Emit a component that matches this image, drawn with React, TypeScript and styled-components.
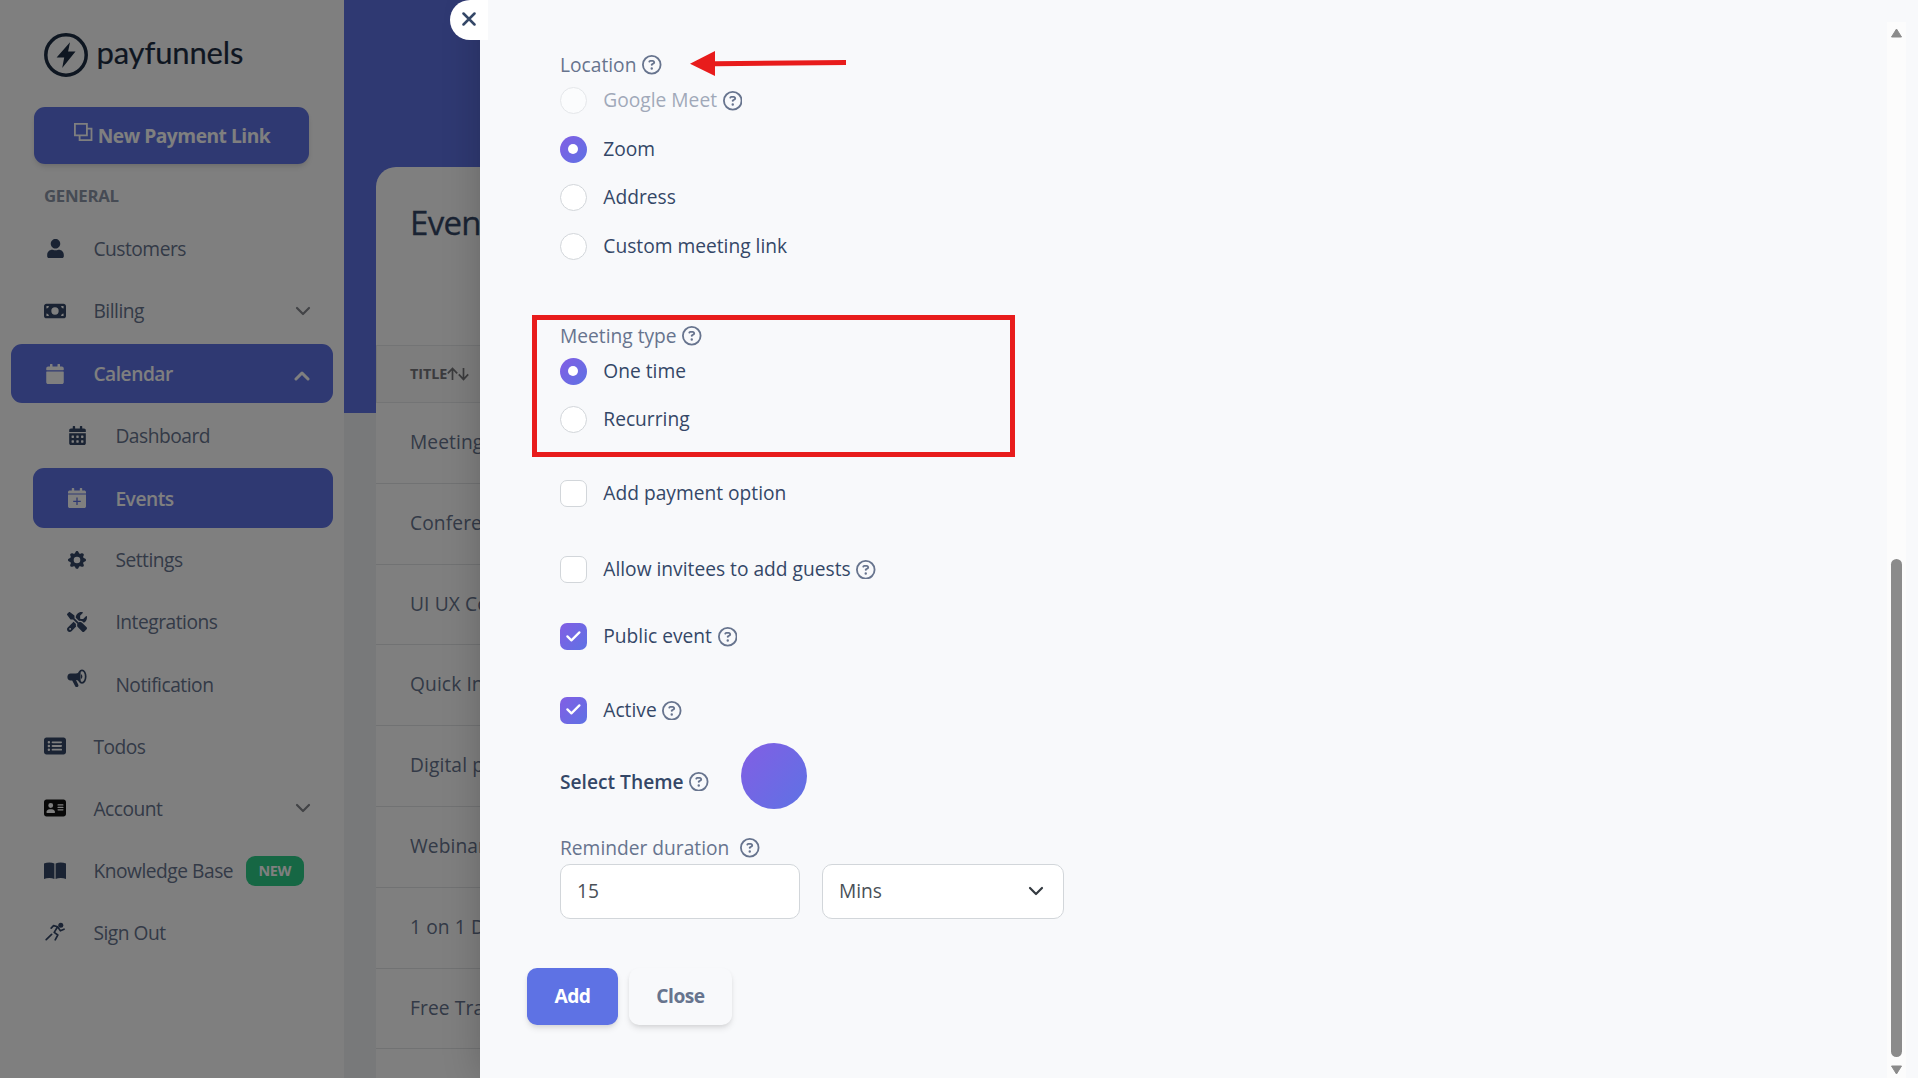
import React from 'react';
import styled, { createGlobalStyle, css } from 'styled-components';
import {
  FaAddressCard,
  FaMoneyBill,
  FaRectangleList,
  FaRegCircleQuestion,
  FaScrewdriverWrench,
} from 'react-icons/fa6';
import { FaCalendar, FaCalendarAlt, FaUser } from 'react-icons/fa';
import { BsGearFill } from 'react-icons/bs';

const colors = {
  primary: '#5e72e4',
  dark: '#344767',
  text: '#67748e',
  surface: '#f8f9fb',
  border: '#d2d6da',
  danger: '#e81c1c',
  gradient: 'linear-gradient(310deg, #5e72e4 0%, #825ee4 100%)',
};

/* ---------- icons ---------- */

const LogoMark = () => (
  <svg width="44" height="44" viewBox="0 0 44 44">
    <circle cx="22" cy="22" r="20.2" fill="none" stroke="#1c2d42" strokeWidth="3.5" />
    <path d="M26 9.2 12.6 24.4h7.6L18.2 35 31.5 18.4h-7.4z" fill="#1c2d42" />
  </svg>
);

const LinkCopy = () => (
  <svg width="19" height="19" viewBox="0 0 19 19" fill="none" stroke="#fff" strokeWidth="1.8">
    <path d="M.9.9h12v11.4H.9zM12.9 5.6h4.6v11.6H5.6v-4.9" />
  </svg>
);

const Chevron = ({ up = false, bold = false }: { up?: boolean; bold?: boolean }) => (
  <svg width="16" height="10" viewBox="0 0 16 10" fill="none" stroke="currentColor"
       strokeWidth={ bold ? 3 : 2.2 } strokeLinecap="round" strokeLinejoin="round">
    <path d={ up ? 'M2 8l6-6 6 6' : 'M2 2l6 6 6-6' } />
  </svg>
);

const CalendarPlus = () => (
  <svg width="18" height="20" viewBox="0 0 18 20">
    <path d="M0 5.4V4.200C0 3.200.8 2.500 1.800 2.500h2V.6C3.800.2 4 0 4.400 0h1.200c.4 0 .6.2.6.6v1.900h5.600V.6c0-.4.2-.6.6-.6h1.200c.4 0 .6.2.6.6v1.900h2c1 0 1.800.7 1.800 1.700v1.200z" fill="currentColor" />
    <path d="M0 6.500h18v11.700c0 1-.8 1.800-1.800 1.800H1.800C.8 20 0 19.200 0 18.200z" fill="currentColor" />
    <path d="M9 9.500v7.600M5.200 13.300h7.600" stroke={ colors.primary } strokeWidth="1.3" />
  </svg>
);

const Megaphone = () => (
  <svg width="20" height="20" viewBox="0 0 20 20">
    <path d="M3.6 4.4h5.2c2 0 3.6-1.2 4.8-3v12.4c-1.2-1.6-2.8-2.6-4.6-2.7l2.3 4.6c.5 1.1-.1 1.9-1 2.3-.9.3-1.7 0-2.1-.8L5.2 11.5H3.6C1.5 11.5.4 10 .4 8s1.1-3.6 3.2-3.6z" fill="currentColor" />
    <ellipse cx="15" cy="7.6" rx="3.7" ry="6.3" fill="none" stroke="currentColor" strokeWidth="1.7" />
    <path d="M14 5.2c1.8.6 1.8 4 0 4.7z" fill="currentColor" />
  </svg>
);

const Book = () => (
  <svg width="22" height="18" viewBox="0 0 22 18" fill="currentColor">
    <path d="M0 1.6C3 .3 7.5.2 10.4 1.6V17C7.5 15.7 3 15.8 0 17zM11.6 1.6C14.5.2 19 .3 22 1.6V17c-3-1.2-7.5-1.3-10.4 0z" />
  </svg>
);

const Runner = () => (
  <svg width="20" height="20" viewBox="0 0 20 20" fill="none" stroke="currentColor"
       strokeWidth="1.7" strokeLinecap="round" strokeLinejoin="round">
    <circle cx="15.8" cy="3.2" r="2.5" fill="currentColor" stroke="none" />
    <path d="M6.2 6.2l2.4-2.6 4 1.2-3.4 5.6 3.6 2.6-2.6 4.8M12.6 4.8l2.8 4 3.6-1.6M1.2 17.6l5.4-5.2" />
  </svg>
);

const SortArrows = () => (
  <svg width="23" height="14" viewBox="0 0 23 14" fill="none" stroke="#76777a" strokeWidth="1.7">
    <path d="M5.5 13V1.6M.8 6.4l4.700-5 4.700 5M16.500 1v11.400M11.800 7.400l4.700 5 4.700-5" />
  </svg>
);

const CheckMark = () => (
  <svg width="15" height="11" viewBox="0 0 15 11" fill="none" stroke="#fff" strokeWidth="2.2"
       strokeLinecap="round" strokeLinejoin="round">
    <path d="M1.4 5.4l4 4 8-8" />
  </svg>
);

/* ---------- data ---------- */

type NavEntry = {
  label: string;
  icon: React.ReactNode;
  sub?: boolean;
  active?: boolean;
  arrow?: 'up' | 'down';
  badge?: string;
  lift?: number;
};

const navigation: NavEntry[] = [
  { label: 'Customers', icon: <FaUser size={ 19 } /> },
  { label: 'Billing', icon: <FaMoneyBill size={ 22 } />, arrow: 'down' },
  { label: 'Calendar', icon: <FaCalendar size={ 20 } />, active: true, arrow: 'up' },
  { label: 'Dashboard', icon: <FaCalendarAlt size={ 19 } />, sub: true },
  { label: 'Events', icon: <CalendarPlus />, sub: true, active: true },
  { label: 'Settings', icon: <BsGearFill size={ 18 } />, sub: true },
  { label: 'Integrations', icon: <FaScrewdriverWrench size={ 20 } />, sub: true },
  { label: 'Notification', icon: <Megaphone />, sub: true, lift: 10 },
  { label: 'Todos', icon: <FaRectangleList size={ 22 } /> },
  { label: 'Account', icon: <FaAddressCard size={ 22 } color="#111" />, arrow: 'down' },
  { label: 'Knowledge Base', icon: <Book />, badge: 'NEW' },
  { label: 'Sign Out', icon: <Runner />, lift: 2 },
];

const events = [
  'Meeting',
  'Conference',
  'UI UX Consultation',
  'Quick Intro',
  'Digital planning',
  'Webinar',
  '1 on 1 Discussion',
  'Free Training',
  '',
];

/* ---------- components ---------- */

const Help = () => <HelpIcon><FaRegCircleQuestion size={ 19.5 } /></HelpIcon>;

type OptionProps = {
  label: string;
  round?: boolean;
  checked?: boolean;
  disabled?: boolean;
  help?: boolean;
  gap: number;
};

const Option = ({ label, round, checked, disabled, help, gap }: OptionProps) => (
  <OptionRow $gap={ gap }>
    <Control $round={ round } $checked={ checked } $disabled={ disabled }>
      { checked && (round ? <Dot /> : <CheckMark />) }
    </Control>
    <OptionLabel $disabled={ disabled }>{ label }</OptionLabel>
    { help && <Help /> }
  </OptionRow>
);

const Sidebar = () => (
  <StyledSidebar>
    <Brand>
      <LogoMark />
      <BrandName>payfunnels</BrandName>
    </Brand>
    <NewLinkButton><LinkCopy />New Payment Link</NewLinkButton>
    <GroupTitle>GENERAL</GroupTitle>
    <Nav>
      { navigation.map(item => (
        <NavItem key={ item.label } $sub={ item.sub } $active={ item.active }>
          <NavIcon $active={ item.active } $lift={ item.lift }>{ item.icon }</NavIcon>
          <NavLabel>{ item.label }</NavLabel>
          { item.badge && <Badge>{ item.badge }</Badge> }
          { item.arrow && (
            <NavArrow $active={ item.active }>
              <Chevron up={ item.arrow === 'up' } bold={ item.active } />
            </NavArrow>
          ) }
        </NavItem>
      )) }
    </Nav>
  </StyledSidebar>
);

const EventsPage = () => (
  <Page>
    <Card>
      <CardTitle>Events</CardTitle>
      <TableHead>TITLE<SortArrows /></TableHead>
      { events.map((title, i) => <TableRow key={ i }>{ title }</TableRow>) }
    </Card>
  </Page>
);

const EventDrawer = () => (
  <Drawer>
    <Form>
      <FieldLabel $gap={ 51 }>Location<Help /></FieldLabel>
      <Option label="Google Meet" gap={ 8.4 } round disabled help />
      <Option label="Zoom" gap={ 21.6 } round checked />
      <Option label="Address" gap={ 21.4 } round />
      <Option label="Custom meeting link" gap={ 21.6 } round />

      <FieldLabel $gap={ 62 }>Meeting type<Help /></FieldLabel>
      <Option label="One time" gap={ 8 } round checked />
      <Option label="Recurring" gap={ 21.4 } round />

      <Option label="Add payment option" gap={ 46.6 } />
      <Option label="Allow invitees to add guests" gap={ 49 } help />
      <Option label="Public event" gap={ 40.4 } checked help />
      <Option label="Active" gap={ 46.6 } checked help />

      <ThemeRow>
        <ThemeLabel>Select Theme<Help /></ThemeLabel>
        <ThemeSwatch />
      </ThemeRow>

      <FieldLabel $gap={ 25 } $wide>Reminder duration<Help /></FieldLabel>
      <Fields>
        <Field>15</Field>
        <Field $select>Mins<Chevron /></Field>
      </Fields>
      <Actions>
        <Button $primary>Add</Button>
        <Button>Close</Button>
      </Actions>
    </Form>
    <Scrollbar>
      <svg width="13" height="10" viewBox="0 0 13 10">
        <path d="M6.5 1l5 8h-10z" fill="#8b8b8b" stroke="#8b8b8b" strokeLinejoin="round" />
      </svg>
      <Thumb />
      <svg width="13" height="10" viewBox="0 0 13 10">
        <path d="M6.5 9l5-8h-10z" fill="#8b8b8b" stroke="#8b8b8b" strokeLinejoin="round" />
      </svg>
    </Scrollbar>
    <CloseTab>
      <svg width="14" height="14" viewBox="0 0 14 14" stroke="#344767" strokeWidth="2.5" strokeLinecap="round">
        <path d="M1.5 1.5l11 11M12.5 1.5l-11 11" />
      </svg>
    </CloseTab>
    <Arrow width="158" height="28" viewBox="0 0 158 28">
      <path d="M1 13.7L26 1v10.3L157 10v5L26 16.2V26z" fill={ colors.danger } />
    </Arrow>
    <Highlight />
  </Drawer>
);

const App = () => (
  <>
    <GlobalStyle />
    <Screen>
      <Sidebar />
      <EventsPage />
      <Backdrop />
      <EventDrawer />
    </Screen>
  </>
);

export default App;

/* ---------- styles ---------- */

const GlobalStyle = createGlobalStyle`
  *, *::before, *::after {
    box-sizing: border-box;
  }

  body {
    margin: 0;
    font-family: "Open Sans", sans-serif;
    font-size: 19.2px;
    color: ${ colors.text };
    overflow: hidden;
  }

  svg {
    display: block;
    flex-shrink: 0;
  }
`

const Screen = styled.div`
  position: relative;
  display: flex;
  width: 1918px;
  height: 1078px;
  overflow: hidden;
`

const StyledSidebar = styled.aside`
  width: 344px;
  flex-shrink: 0;
  background: #fff;
  letter-spacing: -0.48px;
`

const Brand = styled.div`
  display: flex;
  align-items: center;
  gap: 8.5px;
  height: 44px;
  margin: 33px 0 0 44px;
`

const BrandName = styled.span`
  font-family: Lato, sans-serif;
  font-size: 31px;
  line-height: 40px;
  letter-spacing: -0.15px;
  color: #1c2d42;
  -webkit-text-stroke: 0.2px #1c2d42;
  padding-bottom: 6px;
`

const NewLinkButton = styled.button`
  display: flex;
  align-items: center;
  justify-content: center;
  gap: 5px;
  width: 275px;
  height: 57px;
  margin: 30px 0 0 34px;
  padding: 0 0 1px 1px;
  border: 0;
  border-radius: 11px;
  background: ${ colors.primary };
  box-shadow: 0 4px 7px -1px rgba(0, 0, 0, 0.11), 0 2px 4px -1px rgba(0, 0, 0, 0.07);
  color: #fff;
  font: 700 19.2px "Open Sans", sans-serif;
  letter-spacing: -0.48px;

  svg {
    margin-bottom: 5px;
  }
`

const GroupTitle = styled.h6`
  margin: 19px 0 0 44px;
  font-size: 16.8px;
  line-height: 26px;
  font-weight: 700;
  letter-spacing: -0.3px;
  color: #8d97a8;
`

const Nav = styled.nav`
  display: flex;
  flex-direction: column;
  gap: 2.7px;
  margin-top: 10px;
`

const NavItem = styled.a<{ $sub?: boolean; $active?: boolean }>`
  display: flex;
  align-items: center;
  height: 59.5px;
  margin: 0 11px 0 ${ props => props.$sub ? 33 : 11 }px;
  padding-left: 33px;
  border-radius: 11px;
  color: ${ colors.text };

  ${ props => props.$active && css`
    position: relative;
    top: 0.5px;
    background: ${ colors.primary };
    color: #fff;
    font-weight: 600;
  ` }
`

const NavIcon = styled.span<{ $active?: boolean; $lift?: number }>`
  display: flex;
  justify-content: center;
  flex-shrink: 0;
  width: 22px;
  margin-right: 27.4px;
  padding-bottom: ${ props => props.$lift || 0 }px;
  color: ${ props => props.$active ? '#fff' : colors.dark };
`

const NavLabel = styled.span`
  white-space: nowrap;
`

const NavArrow = styled.span<{ $active?: boolean }>`
  margin: ${ props => props.$active ? '4px 23px 0 auto' : '0 22px 0 auto' };
  color: ${ props => props.$active ? '#fff' : '#84878c' };
`

const Badge = styled.span`
  display: flex;
  align-items: center;
  justify-content: center;
  width: 58px;
  height: 30px;
  margin-left: 12.6px;
  border-radius: 9px;
  background: #2dce89;
  color: #fff;
  font-size: 14.4px;
  font-weight: 700;
`

const Page = styled.main`
  flex: 1;
  padding: 167px 32px 0;
  background: linear-gradient(${ colors.primary } 413px, #f0f2f4 413px);
`

const Card = styled.section`
  height: 911px;
  overflow: hidden;
  border-radius: 20px 20px 0 0;
  background: #fff;
`

const CardTitle = styled.h5`
  height: 178px;
  margin: 0;
  padding: 33px 34px;
  font-size: 33px;
  line-height: 46px;
  font-weight: 500;
  letter-spacing: -0.7px;
  color: ${ colors.dark };
  -webkit-text-stroke: 0.3px ${ colors.dark };
`

const TableHead = styled.div`
  display: flex;
  align-items: center;
  height: 58px;
  padding: 0 0 1px 33px;
  border: 1px solid #e6e9ea;
  background: #fafafa;
  color: #76777a;
  font-size: 14.4px;
  font-weight: 700;
  letter-spacing: -0.1px;
`

const TableRow = styled.div`
  height: 80.8px;
  padding-left: 34px;
  border-bottom: 1px solid #e3e5e7;
  line-height: 78.4px;
  white-space: nowrap;
  letter-spacing: 0.1px;
`

const Backdrop = styled.div`
  position: absolute;
  inset: 0;
  background: rgba(0, 0, 0, 0.5);
`

const Drawer = styled.div`
  position: absolute;
  top: 0;
  right: 0;
  bottom: 0;
  left: 480px;
  display: flex;
  background: ${ colors.surface };
  box-shadow: 0 0 36px rgba(0, 0, 0, 0.2);
`

const Form = styled.div`
  flex: 1;
  display: flex;
  flex-direction: column;
  padding-left: 80px;
`

const HelpIcon = styled.span`
  margin-left: 5.7px;
  color: ${ colors.text };
`

const FieldLabel = styled.div<{ $gap: number; $wide?: boolean }>`
  display: flex;
  align-items: center;
  height: 28px;
  margin-top: ${ props => props.$gap }px;
  line-height: 26px;

  ${ HelpIcon } {
    margin-left: ${ props => props.$wide ? 11 : 5.7 }px;
  }
`

const OptionRow = styled.label<{ $gap: number }>`
  display: flex;
  align-items: center;
  height: 27px;
  margin-top: ${ props => props.$gap }px;
`

const Control = styled.span<{ $round?: boolean; $checked?: boolean; $disabled?: boolean }>`
  display: flex;
  align-items: center;
  justify-content: center;
  width: 27px;
  height: 27px;
  margin-right: 16.3px;
  padding: 0 1px 1px 0;
  border: ${ props => props.$checked ? 0 : `1px solid ${ colors.border }` };
  border-radius: ${ props => props.$round ? '50%' : '7px' };
  background: ${ props => props.$checked ? colors.gradient : '#fff' };
  opacity: ${ props => props.$disabled ? 0.5 : 1 };
`

const Dot = styled.span`
  width: 10px;
  height: 10px;
  border-radius: 50%;
  background: #fff;
`

const OptionLabel = styled.span<{ $disabled?: boolean }>`
  padding-bottom: 0.8px;
  line-height: 26px;
  color: ${ props => props.$disabled ? colors.text : colors.dark };
  opacity: ${ props => props.$disabled ? 0.6 : 1 };
`

const ThemeRow = styled.div`
  display: flex;
  align-items: flex-start;
  gap: 32px;
  height: 66px;
  margin-top: 19px;
`

const ThemeLabel = styled.span`
  display: flex;
  align-items: center;
  height: 28px;
  margin-top: 24.5px;
  font-weight: 600;
  color: ${ colors.dark };
`

const ThemeSwatch = styled.span`
  width: 66px;
  height: 66px;
  border-radius: 50%;
  background: ${ colors.gradient };
`

const Fields = styled.div`
  display: flex;
  gap: 22px;
  margin-top: 2px;
`

const Field = styled.div<{ $select?: boolean }>`
  display: flex;
  align-items: center;
  justify-content: space-between;
  width: ${ props => props.$select ? 242 : 240 }px;
  height: 55px;
  padding: 0 19px 2px 16px;
  border: 1px solid ${ colors.border };
  border-radius: 10px;
  background: #fff;
  color: #495057;

  svg {
    margin-top: 2px;
    color: #343a40;
  }
`

const Actions = styled.div`
  display: flex;
  gap: 11px;
  margin: 49px 0 0 -33px;
`

const Button = styled.button<{ $primary?: boolean }>`
  width: ${ props => props.$primary ? 91 : 103 }px;
  height: 57px;
  padding: 0 0 2px;
  border: 0;
  border-radius: 10px;
  background: ${ props => props.$primary ? colors.primary : colors.surface };
  box-shadow: 0 4px 7px -1px rgba(0, 0, 0, 0.11), 0 2px 4px -1px rgba(0, 0, 0, 0.07);
  color: ${ props => props.$primary ? '#fff' : colors.text };
  font: 700 19.2px "Open Sans", sans-serif;
  letter-spacing: -0.48px;
`

const Scrollbar = styled.div`
  display: flex;
  flex-direction: column;
  align-items: center;
  justify-content: space-between;
  width: 19px;
  margin: 22px 12px 0 0;
  padding: 6px 0 3px;
  background: #fcfcfc;
`

const Thumb = styled.div`
  width: 11px;
  height: 498px;
  margin: auto 0 8px;
  border-radius: 6px;
  background: #8b8b8b;
`

const CloseTab = styled.button`
  position: absolute;
  top: 0;
  left: -30px;
  display: flex;
  width: 38px;
  height: 40px;
  padding: 12px 0 0 12px;
  border: 0;
  border-radius: 20px 0 0 20px;
  background: #fff;
`

const Arrow = styled.svg`
  position: absolute;
  top: 50px;
  left: 209px;
`

const Highlight = styled.div`
  position: absolute;
  top: 315px;
  left: 52px;
  width: 483px;
  height: 142px;
  border: 5px solid ${ colors.danger };
`
